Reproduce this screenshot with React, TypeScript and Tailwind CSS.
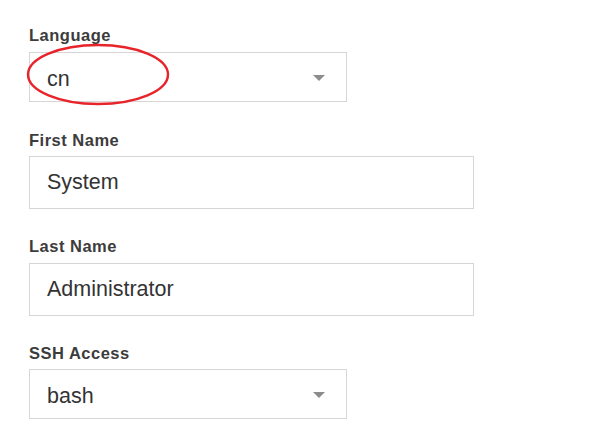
import type { ReactNode } from "react";

function Caret() {
  return (
    <svg width="12" height="6" viewBox="0 0 12 6" className="absolute right-[21px] top-1/2 -mt-[2px]">
      <path d="M0 0H12L6 6Z" fill="#8c8c8c" />
    </svg>
  );
}

function Field({
  label,
  className,
  labelGap,
  children,
}: {
  label: string;
  className?: string;
  labelGap: string;
  children: ReactNode;
}) {
  return (
    <div className={className}>
      <label
        className={`block h-[20px] text-[16.5px] leading-[20px] font-bold tracking-[0.5px] text-[#3c3c3c] ${labelGap}`}
      >
        {label}
      </label>
      {children}
    </div>
  );
}

function SelectBox({ value, circled }: { value: string; circled?: boolean }) {
  return (
    <div className="relative flex h-[50px] w-[318px] items-center border border-[#d6d6d6] bg-white pl-[17px] pt-[4px] text-[21.5px] text-[#333]">
      <span>{value}</span>
      <Caret />
      {circled ? (
        <svg
          width="160"
          height="70"
          viewBox="0 0 160 70"
          className="pointer-events-none absolute -left-[8px] -top-[14px]"
        >
          <ellipse cx="76" cy="35.5" rx="70" ry="29.5" fill="none" stroke="#e8232a" strokeWidth="2.4" />
        </svg>
      ) : null}
    </div>
  );
}

function TextBox({ value }: { value: string }) {
  return (
    <div className="flex h-[53px] w-[445px] items-center border border-[#d6d6d6] bg-white pl-[17px] text-[21.5px] text-[#333]">
      {value}
    </div>
  );
}

export default function App() {
  return (
    <div
      className="h-[433px] w-[590px] bg-white pl-[29px] pt-[25px]"
      style={{ fontFamily: '"Liberation Sans", Arial, sans-serif' }}
    >
      <Field label="Language" labelGap="mb-[7px]">
        <SelectBox value="cn" circled />
      </Field>
      <Field label="First Name" labelGap="mb-[6px]" className="mt-[28px]">
        <TextBox value="System" />
      </Field>
      <Field label="Last Name" labelGap="mb-[7px]" className="mt-[27px]">
        <TextBox value="Administrator" />
      </Field>
      <Field label="SSH Access" labelGap="mb-[6px]" className="mt-[27px]">
        <SelectBox value="bash" />
      </Field>
    </div>
  );
}
